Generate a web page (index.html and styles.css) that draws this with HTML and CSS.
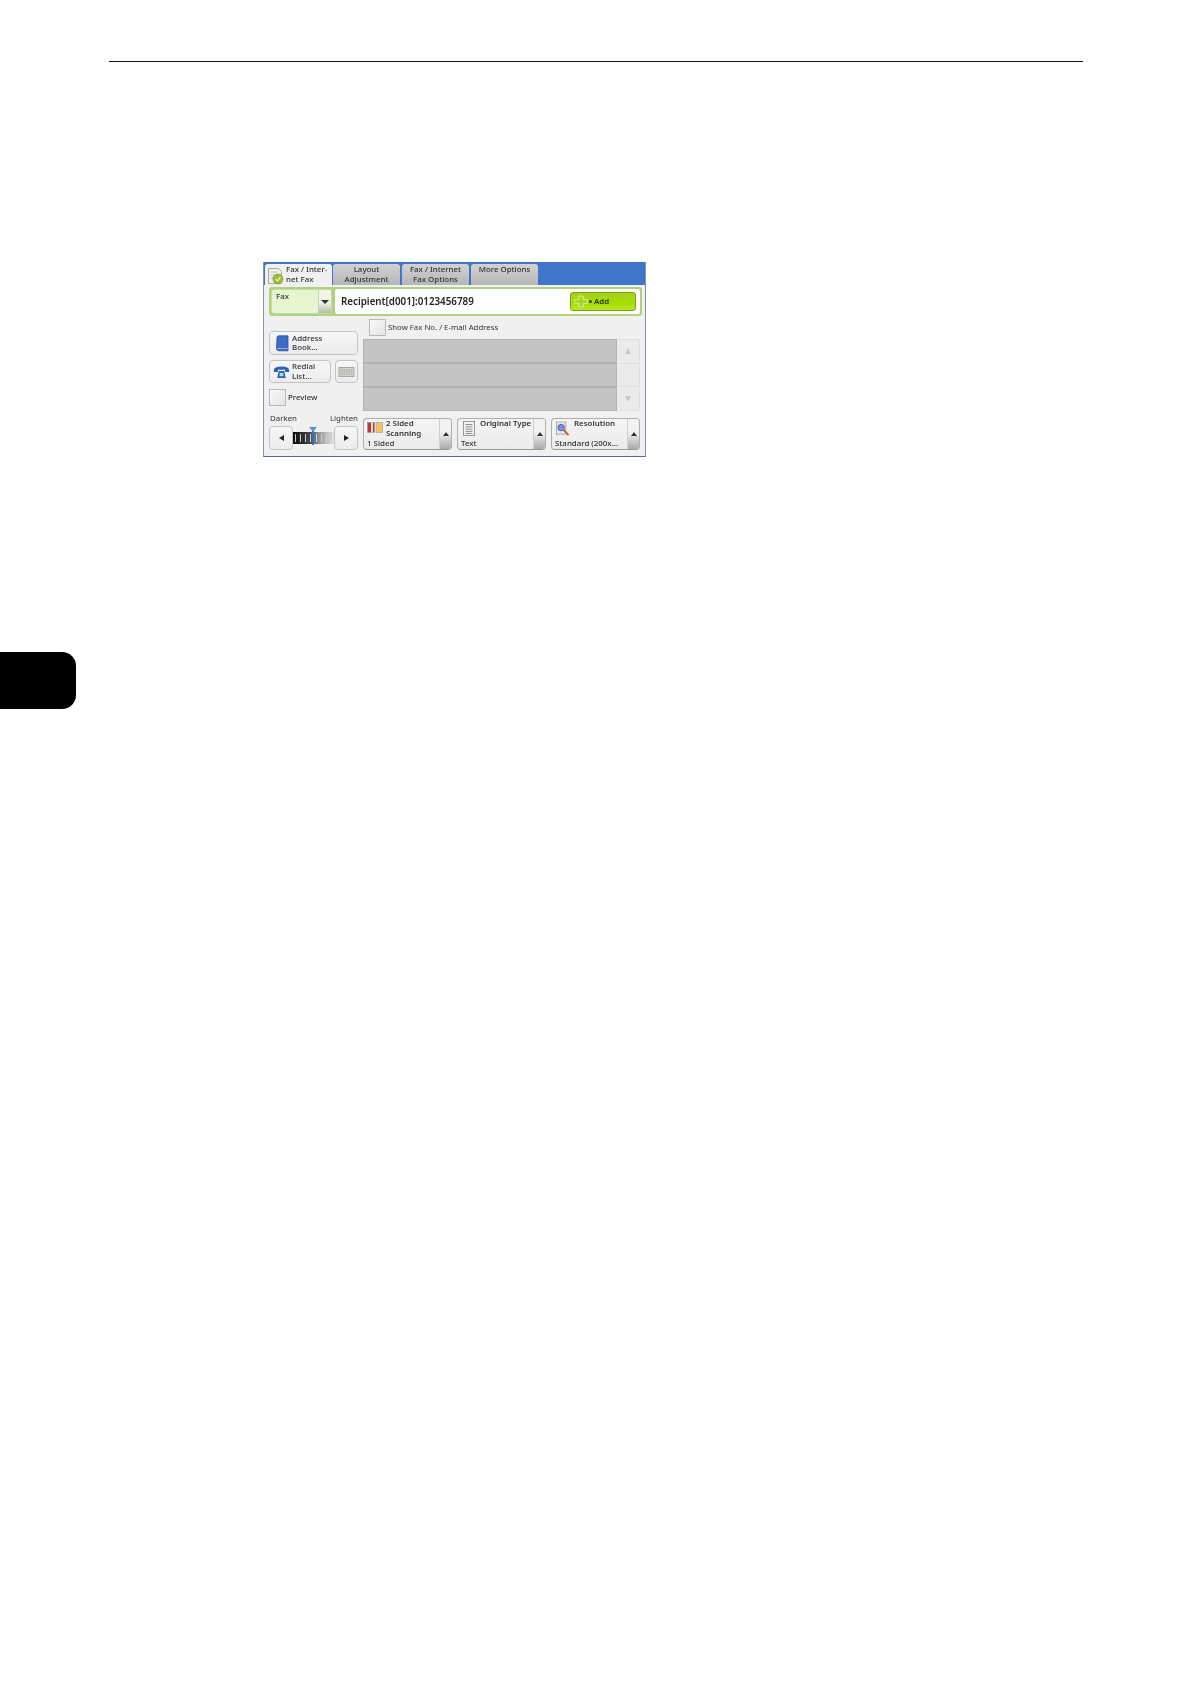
FILE: index.html
```html
<!DOCTYPE html>
<html lang="en">
<head>
<meta charset="utf-8">
<title>Fax / Internet Fax</title>
<link rel="stylesheet" href="styles.css">
</head>
<body>
<header class="rule"></header>
<main class="panel">
  <nav class="tabs">
    <div class="tab tab-active">
      <svg class="tab-icon" viewBox="0 0 18 18"><path d="M1.500 1.500h10l3 3v12h-13z" fill="#f1f1ea" stroke="#a9a9a0"/><path d="M3.500 5h7M3.500 8h6M3.500 11h4" stroke="#bbb"/><circle cx="11" cy="12" r="5" fill="#9cbf2e" stroke="#75962a" stroke-width=".6"/><path d="M8.600 12.300l1.800 1.600 3-3.800" fill="none" stroke="#eef6cf" stroke-width="1.300"/></svg>
      <span class="tab-label">Fax / Inter-<br>net Fax</span>
    </div>
    <div class="tab tab-2">Layout<br>Adjustment</div>
    <div class="tab tab-3">Fax / Internet<br>Fax Options</div>
    <div class="tab tab-4">More Options</div>
  </nav>

  <section class="dest">
    <div class="fax-select">
      <span class="fax-name">Fax</span>
      <span class="fax-arrow"><i class="tri-down"></i></span>
    </div>
    <div class="recipient">
      <span class="recipient-text">Recipient[d001]:0123456789</span>
      <div class="add">
        <svg class="plus" viewBox="0 0 18 16"><path d="M6 1h6v4.500h5v5h-5V15H6v-4.500H1v-5h5z" fill="#a9d42c" stroke="#e2f2a0"/></svg>
        <span class="dot"></span><span>Add</span>
      </div>
    </div>
  </section>

  <section class="work">
    <div class="left">
      <div class="btn btn-address">
        <svg class="book" viewBox="0 0 14 17"><path d="M2 2.500Q2 .8 4 .8h9v15H4Q2 15.800 1.500 14z" fill="#3c6cc6" stroke="#28509c" stroke-width=".8"/><path d="M1.800 13.500h11" stroke="#8fb0e8"/></svg>
        <span>Address<br>Book...</span>
      </div>
      <div class="btn-row">
        <div class="btn btn-redial">
          <svg class="phone" viewBox="0 0 18 15"><path d="M.8 5.500Q1 1.500 9 1.500t8.200 4v2h-4.400V5H5.200v2.500H.8z" fill="#2c64b4"/><path d="M4.500 14l1.500-7.500h6L13.500 14z" fill="#2c64b4"/><rect x="7" y="8.500" width="4" height="3.500" fill="#bcd4f0"/></svg>
          <span>Redial<br>List...</span>
        </div>
        <div class="btn btn-keyboard">
          <svg class="keyboard" viewBox="0 0 16 10"><rect x=".5" y=".5" width="15" height="9" fill="#d2d2ce" stroke="#a8a8a4"/><path d="M2 3h12M2 5h12M2 7.200h12" stroke="#9a9a96" stroke-dasharray="1 .8"/></svg>
        </div>
      </div>
      <div class="check-row preview-row"><span class="check"></span><span>Preview</span></div>
      <div class="density-labels"><span>Darken</span><span>Lighten</span></div>
      <div class="density">
        <div class="btn btn-step"><i class="tri-left"></i></div>
        <div class="gauge">
          <div class="gauge-bar"><i></i><i></i><i></i><i></i><i></i><i></i><i></i><i></i></div>
          <span class="needle"></span>
        </div>
        <div class="btn btn-step"><i class="tri-right"></i></div>
      </div>
    </div>

    <div class="right">
      <div class="check-row show-row"><span class="check"></span><span>Show Fax No. / E-mail Address</span></div>
      <div class="list-wrap">
        <div class="list"><div class="row"></div><div class="row"></div><div class="row"></div></div>
        <div class="scroll">
          <div class="scroll-cell"><i class="tri-up-pale"></i></div>
          <div class="scroll-cell"></div>
          <div class="scroll-cell"><i class="tri-down-pale"></i></div>
        </div>
      </div>
      <div class="features">
        <div class="feature">
          <div class="feature-main">
            <div class="feature-top">
              <svg class="ico-sided" viewBox="0 0 16 11"><rect x=".5" y=".5" width="7" height="10" fill="#b83a34" stroke="#999" stroke-width=".6"/><rect x="4" y=".5" width="2" height="10" fill="#ddd"/><rect x="9" y=".5" width="6.500" height="10" fill="#eec65c" stroke="#999" stroke-width=".6"/></svg>
              <span class="feature-title">2 Sided<br>Scanning</span>
            </div>
            <span class="feature-value">1 Sided</span>
          </div>
          <span class="feature-arrow"><i class="tri-up"></i></span>
        </div>
        <div class="feature">
          <div class="feature-main">
            <div class="feature-top">
              <svg class="ico-doc" viewBox="0 0 12 15"><rect x=".5" y=".5" width="11" height="14" fill="#f2f2f2" stroke="#999"/><path d="M2.500 3.500h7M2.500 5.800h7M2.500 8.100h7M2.500 10.400h7M2.500 12.500h7" stroke="#8f8f8f"/></svg>
              <span class="feature-title">Original Type</span>
            </div>
            <span class="feature-value">Text</span>
          </div>
          <span class="feature-arrow"><i class="tri-up"></i></span>
        </div>
        <div class="feature">
          <div class="feature-main">
            <div class="feature-top">
              <svg class="ico-res" viewBox="0 0 15 16"><rect x=".5" y=".5" width="10" height="13" fill="#e8e8ee" stroke="#aaa"/><circle cx="5.500" cy="6.500" r="3.500" fill="#7f8fe0" stroke="#5a5f99"/><path d="M8 9l5.500 5.500" stroke="#b5642a" stroke-width="2"/></svg>
              <span class="feature-title">Resolution</span>
            </div>
            <span class="feature-value">Standard (200x...</span>
          </div>
          <span class="feature-arrow"><i class="tri-up"></i></span>
        </div>
      </div>
    </div>
  </section>
</main>
<aside class="chapter-tab"></aside>
</body>
</html>
```
FILE: styles.css
```css
* { box-sizing: border-box; }
html, body { margin: 0; padding: 0; background: #fff; }
body { width: 1190px; height: 1684px; overflow: hidden; font-family: "Noto Sans", sans-serif; font-size: 7.900px; line-height: 9.500px; color: #333; }

.rule { height: 1px; margin: 61px 107px 0 109px; background: #111; }

.panel { width: 383px; height: 195px; margin: 200px 0 0 263px; background: #f0f0f0; border: 1px solid #7f93ad; border-top: 0; border-bottom-color: #4d6a8d; filter: blur(.3px); }

.tabs { display: flex; height: 23px; padding: 2px 0 0 1px; background: #3f76c8; }
.tab { height: 21px; margin-right: 2px; padding-top: 1px; border-radius: 3px 3px 0 0; background: linear-gradient(#d2d2d2, #b6b6b6); text-align: center; font-weight: 500; color: #333; white-space: nowrap; }
.tab-active { display: flex; width: 67px; height: 23px; padding-left: 2px; margin-right: 1px; background: #f0f0f0; text-align: left; }
.tab-icon { width: 18px; height: 18px; margin-top: 2px; flex: none; }
.tab-label { margin-left: 1px; }
.tab-2 { width: 67px; }
.tab-3 { width: 67px; }
.tab-4 { width: 67px; }

.dest { display: flex; gap: 3px; height: 29px; margin: 2px 3px 0 5px; padding: 2px; border-radius: 3px; background: #aed37c; }
.fax-select { display: flex; width: 61px; height: 25px; border-radius: 3px; background: #e6f4cf; border: 1px solid #c5d9a9; }
.fax-name { flex: 1; padding: 2px 0 0 4px; font-weight: 500; }
.fax-arrow { display: flex; align-items: center; justify-content: center; width: 13px; background: linear-gradient(#f0f3e8 55%, #b2bca2); border-left: 1px solid #c5d0b5; }
.recipient { flex: 1; display: flex; align-items: center; justify-content: space-between; padding: 0 4px 0 6px; background: #fff; border-radius: 2px; }
.recipient-text { font-size: 9.800px; font-weight: 600; color: #222; }
.add { display: flex; align-items: center; width: 66px; height: 19px; padding-left: 3px; border: 1px solid #7ba400; border-radius: 3px; background: linear-gradient(#a2cf22, #a6df00 60%, #b6e52a); font-size: 7.900px; font-weight: 600; color: #253000; }
.plus { width: 14px; height: 13px; margin-right: 1px; }
.dot { width: 3px; height: 3px; margin-right: 2px; border-radius: 50%; background: #2d4a00; }

.work { display: flex; gap: 5px; padding-left: 5px; margin-top: 3px; }
.left { width: 89px; padding-top: 12px; }
.right { width: 277px; }

.btn { display: flex; align-items: center; border: 1px solid #c3c3c3; border-radius: 4px; background: linear-gradient(#f6f6f6, #ececec); font-weight: 500; }
.btn-address { height: 24px; padding-left: 5px; gap: 3px; }
.book { width: 14px; height: 17px; flex: none; }
.btn-row { display: flex; gap: 4px; margin-top: 5px; }
.btn-redial { width: 62px; height: 23px; padding-left: 3px; gap: 2px; }
.phone { width: 17px; height: 14px; flex: none; }
.btn-keyboard { width: 23px; height: 23px; justify-content: center; }
.keyboard { width: 17px; height: 10px; }

.check-row { display: flex; align-items: center; gap: 2px; }
.check { display: block; width: 17px; height: 17px; border: 1px solid #b9b9b9; background: linear-gradient(135deg, #f9f9f9, #e4e4e4); }
.preview-row { margin-top: 6px; font-weight: 500; }
.density-labels { display: flex; justify-content: space-between; margin-top: 8px; padding-left: 1px; font-weight: 400; }
.density { display: flex; align-items: center; margin-top: 2px; }
.btn-step { width: 24px; height: 24px; justify-content: center; flex: none; }
.gauge { position: relative; flex: 1; height: 24px; display: flex; align-items: center; }
.gauge-bar { display: flex; justify-content: space-around; align-items: center; width: 100%; height: 12px; background: linear-gradient(90deg, #0a0a0a, #444 40%, #999 65%, #e6e6e6); }
.gauge-bar i { width: 1px; height: 8px; background: #cfcfcf; }
.needle { position: absolute; left: 19px; top: 1px; width: 2px; height: 18px; background: #2f6fc8; }
.needle::before { content: ""; position: absolute; left: -3px; top: 0; border-left: 4px solid transparent; border-right: 4px solid transparent; border-top: 5px solid #5b93d8; }

.show-row { height: 17px; margin-left: 6px; font-weight: 400; font-size: 7.800px; }
.list-wrap { display: flex; margin-top: 3px; }
.list { width: 254px; height: 72px; display: flex; flex-direction: column; background: #c4c4c4; border: 1px solid #b4b4b4; }
.row { flex: 1; border-bottom: 2px solid #b0b0b0; }
.row:last-child { border-bottom: 0; }
.scroll { width: 23px; display: flex; flex-direction: column; border-right: 1px solid #e0e0e0; border-top: 1px solid #e0e0e0; border-bottom: 1px solid #e0e0e0; background: #ebebeb; }
.scroll-cell { flex: 1; display: flex; align-items: center; justify-content: center; border-bottom: 1px solid #e0e0e0; }
.scroll-cell:last-child { border-bottom: 0; }

.features { display: flex; gap: 5px; margin-top: 7px; height: 32px; }
.feature { display: flex; width: 89px; border: 1px solid #aeaeae; border-bottom-color: #999; border-radius: 4px; background: linear-gradient(#f4f4f4, #ebebeb); font-weight: 500; }
.feature-main { flex: 1; display: flex; flex-direction: column; justify-content: space-between; padding: 0 0 1px 3px; min-width: 0; }
.feature-top { display: flex; gap: 3px; }
.feature-title { white-space: nowrap; font-weight: 600; }
.feature-value { font-weight: 500; white-space: nowrap; }
.feature-arrow { display: flex; justify-content: center; padding-top: 13px; width: 12px; flex: none; border-left: 1px solid #cfcfcf; border-radius: 0 3px 3px 0; background: linear-gradient(#f2f2f2 45%, #a9a9a9); }
.ico-sided { width: 16px; height: 11px; margin-top: 3px; flex: none; }
.ico-doc { width: 12px; height: 15px; margin: 2px 2px 0 2px; flex: none; }
.ico-res { width: 14px; height: 16px; margin: 2px 1px 0 1px; flex: none; }

.tri-down, .tri-up, .tri-left, .tri-right, .tri-up-pale, .tri-down-pale { display: block; width: 0; height: 0; }
.tri-down { border-left: 4px solid transparent; border-right: 4px solid transparent; border-top: 4px solid #333; }
.tri-up { border-left: 3.500px solid transparent; border-right: 3.500px solid transparent; border-bottom: 4px solid #333; }
.tri-left { border-top: 3px solid transparent; border-bottom: 3px solid transparent; border-right: 5px solid #222; }
.tri-right { border-top: 3px solid transparent; border-bottom: 3px solid transparent; border-left: 5px solid #222; }
.tri-up-pale { border-left: 3.500px solid transparent; border-right: 3.500px solid transparent; border-bottom: 6px solid #c9c9c9; }
.tri-down-pale { border-left: 3.500px solid transparent; border-right: 3.500px solid transparent; border-top: 6px solid #c9c9c9; }

.chapter-tab { width: 76px; height: 57px; margin-top: 195px; border-radius: 0 14px 14px 0; background: #000; }
```
